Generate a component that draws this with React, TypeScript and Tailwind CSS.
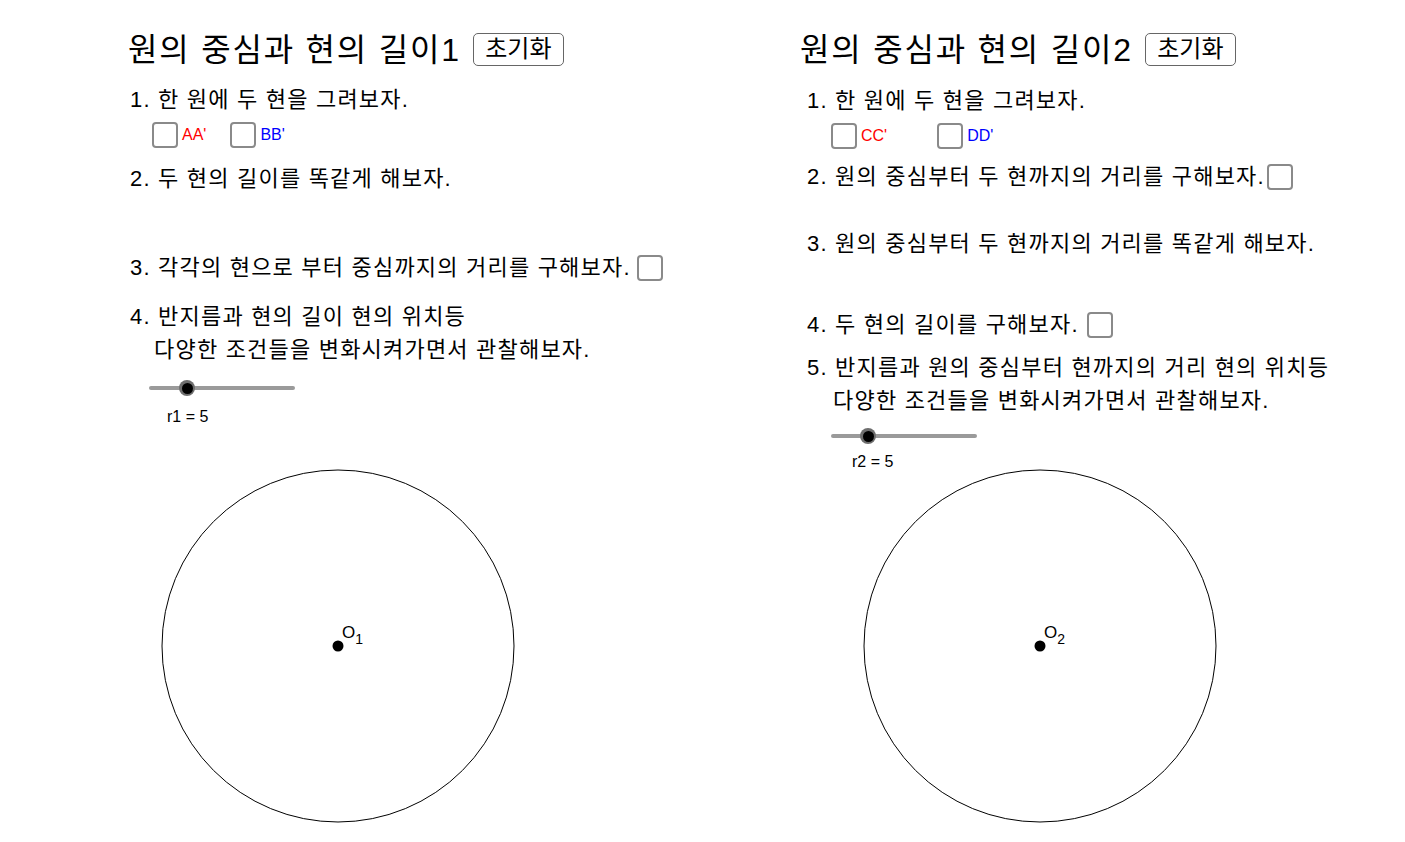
import React from "react";

const font = { fontFamily: '"Liberation Sans", "Noto Sans CJK KR", sans-serif' };

/** 빈 체크박스 */
const Box = ({ className = "" }: { className?: string }) => (
  <span
    className={`inline-block shrink-0 w-[26px] h-[26px] rounded-[4px] border-2 border-[#8a8a8a] bg-white ${className}`}
  />
);

const Title = ({ text }: { text: string }) => (
  <div className="h-[38px] mt-[30px] flex items-center">
    <span className="text-[32px] leading-none tracking-[1.8px] text-black pt-[2px]">{text}</span>
    <button className="ml-[12px] h-[33px] w-[91px] rounded-[5px] border-[1.5px] border-[#666] bg-white text-[24px] leading-none text-black">
      초기화
    </button>
  </div>
);

/** 한 줄 문장 */
const Line = ({
  children,
  mt,
  h = "h-[24px]",
  ml,
}: {
  children: React.ReactNode;
  mt: string;
  h?: string;
  ml: string;
}) => (
  <div
    className={`${h} ${mt} ${ml} flex items-center text-[22px] leading-none tracking-[1.2px] text-black whitespace-nowrap`}
  >
    {children}
  </div>
);

const Slider = ({ mt, ml, knob }: { mt: string; ml: string; knob: string }) => (
  <div className={`${mt} ${ml} relative h-[14px] w-[146px] flex items-center`}>
    <div className="h-[4px] w-full rounded-full bg-[#9a9a9a]" />
    <div
      className={`absolute ${knob} top-[-1px] w-[16px] h-[16px] rounded-full bg-[#6e6e6e] flex items-center justify-center`}
    >
      <div className="w-[11px] h-[11px] rounded-full bg-black" />
    </div>
  </div>
);

const Circle = ({ cx, cy, sub, h }: { cx: number; cy: number; sub: string; h: number }) => (
  <svg width="460" height={h} className="block">
    <circle cx={cx} cy={cy} r="176" fill="none" stroke="#000" strokeWidth="1" />
    <circle cx={cx} cy={cy} r="5.5" fill="#000" />
    <text x={cx + 4} y={cy - 8} fontSize="17" fontFamily="Liberation Sans, sans-serif">
      O
      <tspan fontSize="14" dy="6">
        {sub}
      </tspan>
    </text>
  </svg>
);

export default function App() {
  return (
    <div className="w-[1405px] h-[842px] bg-white flex overflow-hidden" style={font}>
      {/* 왼쪽 애플릿 */}
      <div className="ml-[128px] w-[672px] flex flex-col">
        <Title text="원의 중심과 현의 길이1" />
        <Line mt="mt-[20px]" ml="ml-[2px]">1. 한 원에 두 현을 그려보자.</Line>
        <div className="mt-[10px] ml-[24px] h-[26px] flex items-center">
          <Box />
          <span className="ml-[4px] text-[16px] text-[#ff0000]">AA'</span>
          <Box className="ml-[24px]" />
          <span className="ml-[4px] text-[16px] text-[#0000ff]">BB'</span>
        </div>
        <Line mt="mt-[19px]" ml="ml-[2px]">2. 두 현의 길이를 똑같게 해보자.</Line>
        <Line mt="mt-[64px]" ml="ml-[2px]" h="h-[26px]">
          3. 각각의 현으로 부터 중심까지의 거리를 구해보자.
          <Box className="ml-[6px]" />
        </Line>
        <Line mt="mt-[24px]" ml="ml-[2px]">4. 반지름과 현의 길이 현의 위치등</Line>
        <Line mt="mt-[9px]" ml="ml-[26px]">다양한 조건들을 변화시켜가면서 관찰해보자.</Line>
        <Slider mt="mt-[19px]" ml="ml-[21px]" knob="left-[30px]" />
        <div className="mt-[14px] ml-[39px] h-[16px] flex items-center text-[16px] text-black">r1 = 5</div>
        <div className="mt-[41px]">
          <Circle cx={210} cy={180} sub="1" h={360} />
        </div>
      </div>

      {/* 오른쪽 애플릿 */}
      <div className="w-[605px] flex flex-col">
        <Title text="원의 중심과 현의 길이2" />
        <Line mt="mt-[21px]" ml="ml-[7px]">1. 한 원에 두 현을 그려보자.</Line>
        <div className="mt-[9px] ml-[31px] h-[27px] flex items-center">
          <Box />
          <span className="ml-[4px] text-[16px] text-[#ff0000]">CC'</span>
          <Box className="ml-[50px]" />
          <span className="ml-[4px] text-[16px] text-[#0000ff]">DD'</span>
        </div>
        <Line mt="mt-[15px]" ml="ml-[7px]" h="h-[26px]">
          2. 원의 중심부터 두 현까지의 거리를 구해보자.
          <Box className="ml-[2px]" />
        </Line>
        <Line mt="mt-[42px]" ml="ml-[7px]">3. 원의 중심부터 두 현까지의 거리를 똑같게 해보자.</Line>
        <Line mt="mt-[56px]" ml="ml-[7px]" h="h-[26px]">
          4. 두 현의 길이를 구해보자.
          <Box className="ml-[8px]" />
        </Line>
        <Line mt="mt-[18px]" ml="ml-[7px]">5. 반지름과 원의 중심부터 현까지의 거리 현의 위치등</Line>
        <Line mt="mt-[9px]" ml="ml-[33px]">다양한 조건들을 변화시켜가면서 관찰해보자.</Line>
        <Slider mt="mt-[16px]" ml="ml-[31px]" knob="left-[29px]" />
        <div className="mt-[13px] ml-[52px] h-[12px] flex items-center text-[16px] text-black">r2 = 5</div>
        <div>
          <Circle cx={240} cy={178} sub="2" h={356} />
        </div>
      </div>
    </div>
  );
}
